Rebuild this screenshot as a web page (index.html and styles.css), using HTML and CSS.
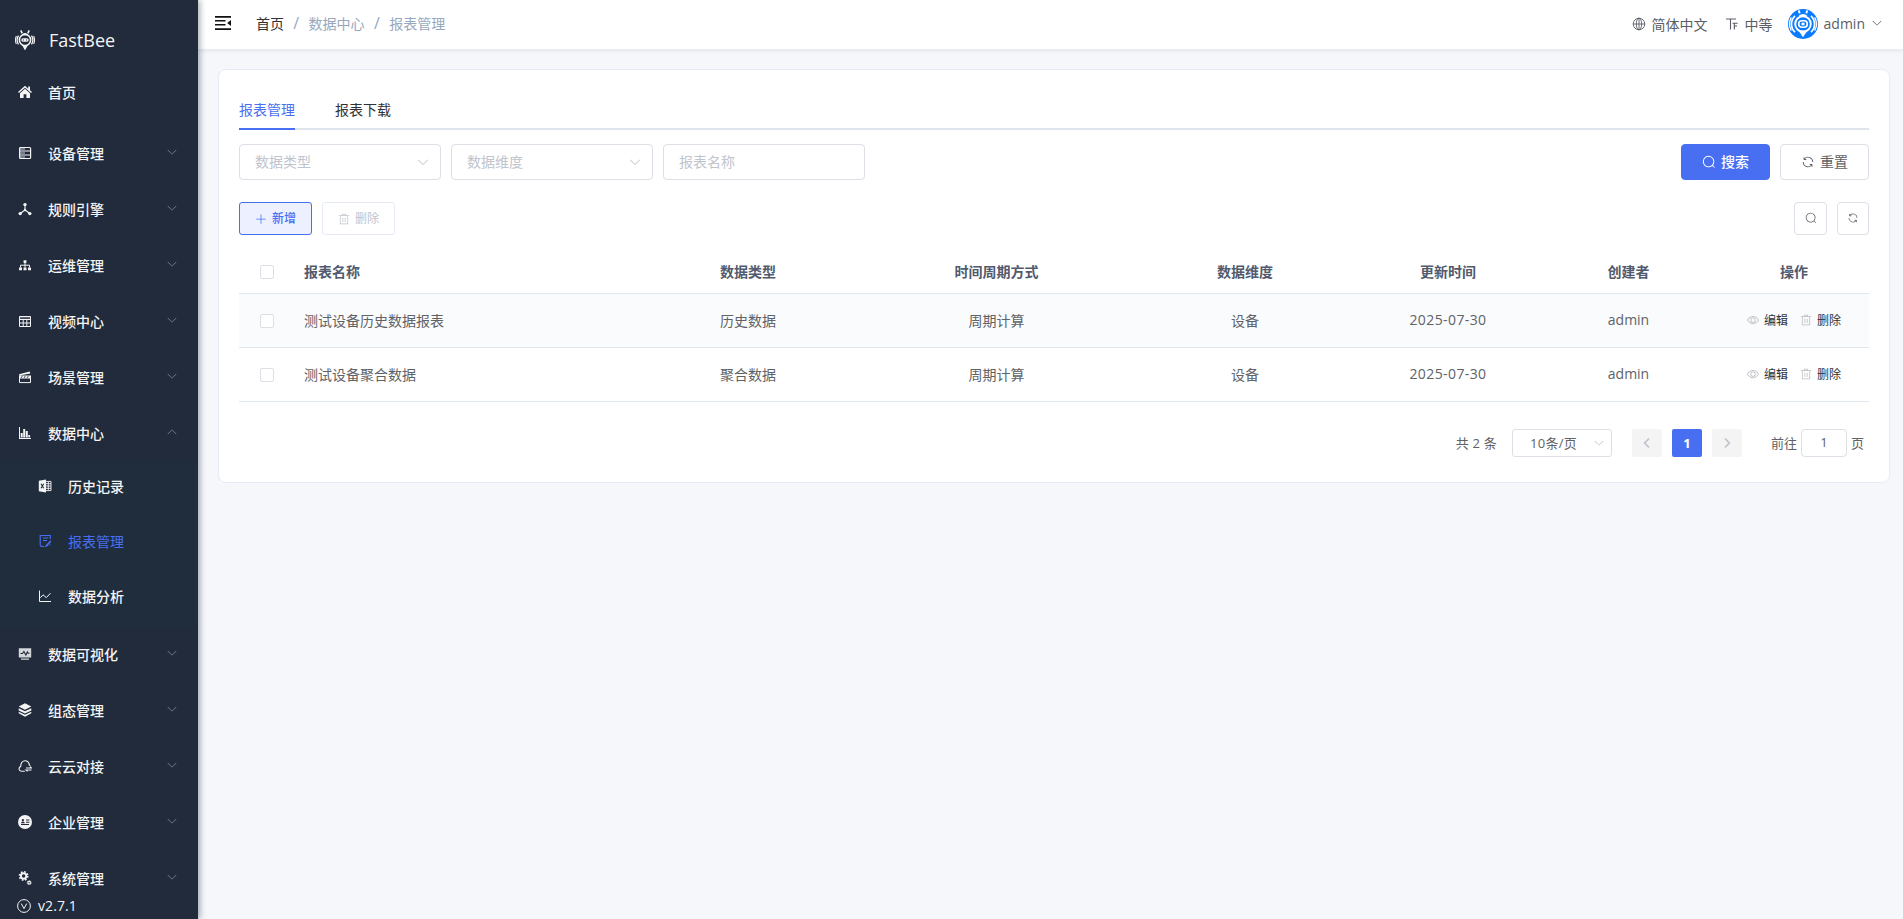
FILE: index.html
```html
<!DOCTYPE html>
<html lang="zh-CN">
<head>
  <meta charset="UTF-8" />
  <meta name="viewport" content="width=device-width, initial-scale=1" />
  <title>报表管理 - FastBee</title>
  <link rel="stylesheet" href="styles.css">
</head>
<body>
  <svg class="sprite" aria-hidden="true">
    <symbol id="i-down" viewBox="0 0 1024 1024"><path d="M831.872 340.864 512 652.672 192.128 340.864a30.592 30.592 0 0 0-42.752 0 29.12 29.12 0 0 0 0 41.6L489.664 714.24a32 32 0 0 0 44.672 0l340.288-331.712a29.12 29.12 0 0 0 0-41.728 30.592 30.592 0 0 0-42.752 0z"/></symbol>
    <symbol id="i-search" viewBox="0 0 1024 1024"><path d="m795.904 750.72 124.992 124.928a32 32 0 0 1-45.248 45.248L750.656 795.904a416 416 0 1 1 45.248-45.248zM480 832a352 352 0 1 0 0-704 352 352 0 0 0 0 704"/></symbol>
    <symbol id="i-refresh" viewBox="0 0 1024 1024"><path d="M771.776 794.88A384 384 0 0 1 128 512h64a320 320 0 0 0 555.712 216.448H654.72a32 32 0 1 1 0-64h149.056a32 32 0 0 1 32 32v148.928a32 32 0 1 1-64 0v-50.56zM276.288 295.616h92.992a32 32 0 0 1 0 64H220.16a32 32 0 0 1-32-32V178.56a32 32 0 0 1 64 0v50.56A384 384 0 0 1 896.128 512h-64a320 320 0 0 0-555.776-216.384z"/></symbol>
    <symbol id="i-plus" viewBox="0 0 1024 1024"><path d="M480 480V128a32 32 0 0 1 64 0v352h352a32 32 0 1 1 0 64H544v352a32 32 0 1 1-64 0V544H128a32 32 0 0 1 0-64z"/></symbol>
    <symbol id="i-delete" viewBox="0 0 1024 1024"><path d="M160 256H96a32 32 0 0 1 0-64h256V95.936a32 32 0 0 1 32-32h256a32 32 0 0 1 32 32V192h256a32 32 0 1 1 0 64h-64v672a32 32 0 0 1-32 32H192a32 32 0 0 1-32-32zm448-64v-64H416v64zM224 896h576V256H224zm192-128a32 32 0 0 1-32-32V416a32 32 0 0 1 64 0v320a32 32 0 0 1-32 32m192 0a32 32 0 0 1-32-32V416a32 32 0 0 1 64 0v320a32 32 0 0 1-32 32"/></symbol>
    <symbol id="i-view" viewBox="0 0 1024 1024"><path d="M512 160c320 0 512 352 512 352S832 864 512 864 0 512 0 512s192-352 512-352m0 64c-225.28 0-384.128 208.064-436.8 288 52.608 79.872 211.456 288 436.8 288 225.28 0 384.128-208.064 436.8-288-52.608-79.872-211.456-288-436.8-288m0 64a224 224 0 1 1 0 448 224 224 0 0 1 0-448m0 64a160.192 160.192 0 0 0-160 160c0 88.192 71.744 160 160 160s160-71.808 160-160-71.744-160-160-160"/></symbol>
    <symbol id="i-bee" viewBox="0 0 20 20">
      <g fill="none" stroke="currentColor">
        <path d="M5.8 0.4 7.2 3.4M14.2 0.4 12.8 3.4" stroke-width="1.6"/>
        <circle cx="10" cy="10" r="5.6" stroke-width="1.6"/>
        <path d="M3.5 5.6a8.2 8.2 0 0 0 0 8.8M16.5 5.6a8.2 8.2 0 0 1 0 8.8" stroke-width="1.3"/>
        <path d="M1.4 6a9.4 9.4 0 0 0 0 8M18.6 6a9.4 9.4 0 0 1 0 8" stroke-width="1.1"/>
      </g>
      <path d="M6.8 4.4Q10 1.4 13.2 4.4L12 5.2H8zM7 15h6l-3 5.5z"/>
      <rect x="6.3" y="8.2" width="7.4" height="3.6" rx="1.8"/>
      <path d="M8 9.5h1v1H8zM11 9.5h1v1h-1z" fill="#212b3c"/>
    </symbol>
  </svg>

  <aside class="sidebar">
    <div class="logo"><svg class="logo-icon"><use href="#i-bee"/></svg><span>FastBee</span></div>
    <ul class="menu">
      <li class="menu-item home">
        <svg class="icon" viewBox="0 0 14 14"><path d="M7 .8 0 7.1l.9 1L7 2.7l6.1 5.4.9-1-2-1.8V1.6h-1.8v2.1z"/><path d="M7 3.8 2 8.2V13h3.6V9.2h2.8V13H12V8.2z"/></svg>
        <span>首页</span>
      </li>
      <li class="menu-item">
        <svg class="icon" viewBox="0 0 14 14"><g fill="none" stroke="currentColor" stroke-width="1.2"><rect x="1.6" y="1.5" width="11" height="11" rx="1"/><path d="M1.6 5h11M1.6 9h11"/></g><path d="M2 2h5v2H2zM2 6h5v2H2zM2 10h5v2H2z" opacity=".4"/></svg>
        <span>设备管理</span><svg class="arrow"><use href="#i-down"/></svg>
      </li>
      <li class="menu-item">
        <svg class="icon" viewBox="0 0 14 14"><path d="M7 3v5L2.5 11.3M7 8l4.5 3.3" fill="none" stroke="currentColor" stroke-width="1.1"/><circle cx="7" cy="2.6" r="1.7"/><circle cx="2.2" cy="11.6" r="1.7"/><circle cx="11.8" cy="11.6" r="1.7"/><circle cx="7" cy="8" r="1.2"/></svg>
        <span>规则引擎</span><svg class="arrow"><use href="#i-down"/></svg>
      </li>
      <li class="menu-item">
        <svg class="icon" viewBox="0 0 14 14"><path d="M5.6 2.2h2.8V5H5.6zM1 9.4h3v2.8H1zM5.5 9.4h3v2.8h-3zM10 9.4h3v2.8h-3z"/><path d="M7 5v4.4M2.5 9.4V7.2h9v2.2" fill="none" stroke="currentColor"/></svg>
        <span>运维管理</span><svg class="arrow"><use href="#i-down"/></svg>
      </li>
      <li class="menu-item">
        <svg class="icon" viewBox="0 0 14 14"><path d="M1.5 2.5h11v10h-11zM1.5 5.5h11M1.5 9h11M5.2 5.5v7M8.8 5.5v7" fill="none" stroke="currentColor" stroke-width="1"/><path d="M1.5 2.5h11v2h-11z" opacity=".3"/></svg>
        <span>视频中心</span><svg class="arrow"><use href="#i-down"/></svg>
      </li>
      <li class="menu-item">
        <svg class="icon" viewBox="0 0 14 14"><path d="M1 4.2 11.7 1.4l.6 2L1.5 5.5zM1 5.5h12v3H1z"/><path d="M1.5 7.5v5.1h11V7.5" fill="none" stroke="currentColor"/><path d="m3 8 1.3-2M6 8l1.3-2M9 8l1.3-2" stroke="#212b3c" stroke-width=".8"/></svg>
        <span>场景管理</span><svg class="arrow"><use href="#i-down"/></svg>
      </li>
      <li class="menu-item open">
        <svg class="icon" viewBox="0 0 14 14"><path d="M1 1h1v11h11v1H1z"/><path d="M2.7 7h2v4.5h-2zM5.2 3h2v8.5h-2zM7.8 5h2v6.5h-2zM10.3 9h1.8v2.5h-1.8z"/></svg>
        <span>数据中心</span><svg class="arrow"><use href="#i-down"/></svg>
      </li>
      <li>
        <ul class="submenu">
          <li class="sub-item">
            <svg class="icon" viewBox="0 0 14 14"><path d="M.8 1.8 8 .6v12.8L.8 12.2z"/><path d="M8 2.4h5v9.2H8M8 4.7h5M8 7h5M8 9.3h5M10.3 2.4v9.2" fill="none" stroke="currentColor" stroke-width=".9"/><path d="m3 4.8 2.7 4.4M5.7 4.8 3 9.2" stroke="#1f2d3d" stroke-width="1.1"/></svg>
            <span>历史记录</span>
          </li>
          <li class="sub-item active">
            <svg class="icon" viewBox="0 0 14 14"><g fill="none" stroke="currentColor" stroke-width="1.1"><path d="M12.3 5V1.5H2.2v9.3q0 1.7 1.6 1.7h2.4M5 4h5.3M5 6.5h4"/></g><path d="m12.5 6.2-4.8 5-.8 2 2.1-.7 4.3-4.8zM10.5 12l2-2v1z"/></svg>
            <span>报表管理</span>
          </li>
          <li class="sub-item">
            <svg class="icon" viewBox="0 0 14 14"><path d="M1.5 1.5v11H13M2.3 8.8 5 5.8l3.3 2.8 4.2-4.4" fill="none" stroke="currentColor" stroke-width="1"/></svg>
            <span>数据分析</span>
          </li>
        </ul>
      </li>
      <li class="menu-item">
        <svg class="icon" viewBox="0 0 14 14"><path d="M.8 1.2h12.4v9.3H.8zM3 11.4h8v1.3H3z" opacity=".85"/><path d="M2.5 6.5h2l1.4-2 2 3.5 1.5-3 .8 1.3h1.3" fill="none" stroke="#212b3c" stroke-width="1.1"/></svg>
        <span>数据可视化</span><svg class="arrow"><use href="#i-down"/></svg>
      </li>
      <li class="menu-item">
        <svg class="icon" viewBox="0 0 14 14"><path d="m7 .3 6.3 3.2L7 6.8.7 3.5z"/><path d="m.7 5.2 6.3 3 6.3-3v2.2L7 10.4.7 7.4z"/><path d="m.7 8.7 6.3 3 6.3-3v1.5L7 13.7.7 10.2z"/></svg>
        <span>组态管理</span><svg class="arrow"><use href="#i-down"/></svg>
      </li>
      <li class="menu-item">
        <svg class="icon" viewBox="0 0 14 14"><path d="M6.8 12.2H3.5C.6 12.2.2 8.6 2.7 7.6 2.6 3.9 4.6 1.7 7 1.7c2.5 0 4 1.7 4.3 4.2l1 .8M8 9h5.5L12 7.7M13.5 11H8l1.5 1.3" fill="none" stroke="currentColor" stroke-width="1.1"/></svg>
        <span>云云对接</span><svg class="arrow"><use href="#i-down"/></svg>
      </li>
      <li class="menu-item">
        <svg class="icon" viewBox="0 0 14 14"><circle cx="7" cy="7" r="7"/><g fill="#212b3c"><circle cx="4.9" cy="5.2" r="1.1"/><path d="M3 8.2q0-1.6 1.9-1.6t1.9 1.6zM8 4.4h3.4v1H8zM8 6.7h3.4v1H8zM3 9.1h8v.8H3z"/></g></svg>
        <span>企业管理</span><svg class="arrow"><use href="#i-down"/></svg>
      </li>
      <li class="menu-item">
        <svg class="icon" viewBox="0 0 14 14"><g fill="none" stroke="currentColor"><circle cx="5.6" cy="5" r="2.7" stroke-width="1.9"/><circle cx="5.6" cy="5" r="4.2" stroke-width="1.5" stroke-dasharray="1.7 1.6"/><circle cx="11.2" cy="11.7" r="1.3" stroke-width="1.1"/><circle cx="11.2" cy="11.7" r="2.1" stroke-width=".8" stroke-dasharray=".9 .8"/></g></svg>
        <span>系统管理</span><svg class="arrow"><use href="#i-down"/></svg>
      </li>
    </ul>
    <div class="version">
      <svg viewBox="0 0 14 14"><g fill="none" stroke="currentColor"><circle cx="7" cy="7" r="6.4"/><path d="m4.3 4.6 2.7 5 2.7-5"/></g></svg>
      <span>v2.7.1</span>
    </div>
  </aside>

  <div class="main">
    <header class="navbar">
      <svg class="hamburger" viewBox="0 0 16 14"><path d="M0 0h16v1.8H0zM0 4h10.5v1.6H0zM0 8h10.5v1.6H0zM0 12.2h16V14H0zM16 4v6l-3.8-3z"/></svg>
      <nav class="breadcrumb">
        <span class="first">首页</span><i>/</i><span>数据中心</span><i>/</i><span>报表管理</span>
      </nav>
      <div class="nav-right">
        <div class="nav-link lang">
          <svg viewBox="0 0 14 14"><g fill="none" stroke="currentColor" stroke-width=".9"><circle cx="7" cy="7" r="5.8"/><ellipse cx="7" cy="7" rx="2.7" ry="5.8"/><path d="M7 1.2v11.6M1.2 7h11.6"/></g></svg>
          <span>简体中文</span>
        </div>
        <div class="nav-link size">
          <svg viewBox="0 0 14 14"><path d="M1 2h10M5.5 2v10.5M7.5 6.3h5.2M9.3 6.3v6.2M9.3 9h2.7" fill="none" stroke="currentColor" stroke-width="1.1"/></svg>
          <span>中等</span>
        </div>
        <div class="user">
          <svg class="avatar" viewBox="0 0 30 30">
            <circle cx="15" cy="15" r="15" fill="#0a7bff"/>
            <g fill="none" stroke="#fff">
              <path d="m10.6 1.4 1.2 3M19.4 1.4l-1.2 3" stroke-width="1.8"/>
              <circle cx="15" cy="15" r="7.8" stroke-width="1.9"/>
              <path d="M7 6.8a11.3 11.3 0 0 0 0 16.4M23 6.8a11.3 11.3 0 0 1 0 16.4" stroke-width="1.7"/>
              <path d="M3.3 8.4a13.6 13.6 0 0 0 0 13.2M26.7 8.4a13.6 13.6 0 0 1 0 13.2" stroke-width="1.3"/>
              <rect x="10.7" y="11.8" width="8.6" height="6.4" rx="3.2" stroke-width="1.6"/>
            </g>
            <path d="M10.6 21.6h8.8L15 28.2z" fill="#fff"/>
            <path d="M10.5 6.9Q15 2.9 19.5 6.9L17 8h-4z" fill="#fff"/>
            <rect x="13.5" y="13.7" width="3" height="2.6" fill="#fff"/>
          </svg>
          <span>admin</span>
          <svg class="caret"><use href="#i-down"/></svg>
        </div>
      </div>
    </header>

    <section class="card">
      <div class="tabs">
        <div class="tab active">报表管理</div>
        <div class="tab">报表下载</div>
      </div>

      <div class="filters">
        <div class="field"><span>数据类型</span><svg><use href="#i-down"/></svg></div>
        <div class="field"><span>数据维度</span><svg><use href="#i-down"/></svg></div>
        <div class="field"><span>报表名称</span></div>
        <button class="btn primary push"><svg><use href="#i-search"/></svg><span>搜索</span></button>
        <button class="btn"><svg><use href="#i-refresh"/></svg><span>重置</span></button>
      </div>

      <div class="toolbar">
        <button class="btn small plain"><svg><use href="#i-plus"/></svg><span>新增</span></button>
        <button class="btn small disabled"><svg><use href="#i-delete"/></svg><span>删除</span></button>
        <button class="btn square push"><svg><use href="#i-search"/></svg></button>
        <button class="btn square narrow"><svg><use href="#i-refresh"/></svg></button>
      </div>

      <table class="table">
        <colgroup>
          <col class="c-check"><col class="c-name"><col class="c-type"><col class="c-period"><col class="c-dim"><col class="c-time"><col class="c-user"><col class="c-action">
        </colgroup>
        <thead>
          <tr>
            <th><span class="checkbox"></span></th>
            <th class="left">报表名称</th>
            <th>数据类型</th>
            <th>时间周期方式</th>
            <th>数据维度</th>
            <th>更新时间</th>
            <th>创建者</th>
            <th>操作</th>
          </tr>
        </thead>
        <tbody>
          <tr class="hover">
            <td><span class="checkbox"></span></td>
            <td class="left">测试设备历史数据报表</td>
            <td>历史数据</td>
            <td>周期计算</td>
            <td>设备</td>
            <td class="date">2025-07-30</td>
            <td>admin</td>
            <td><div class="actions"><a><svg><use href="#i-view"/></svg>编辑</a><a><svg><use href="#i-delete"/></svg>删除</a></div></td>
          </tr>
          <tr>
            <td><span class="checkbox"></span></td>
            <td class="left">测试设备聚合数据</td>
            <td>聚合数据</td>
            <td>周期计算</td>
            <td>设备</td>
            <td class="date">2025-07-30</td>
            <td>admin</td>
            <td><div class="actions"><a><svg><use href="#i-view"/></svg>编辑</a><a><svg><use href="#i-delete"/></svg>删除</a></div></td>
          </tr>
        </tbody>
      </table>

      <div class="pagination">
        <span class="total">共 2 条</span>
        <div class="page-size"><span>10条/页</span><svg><use href="#i-down"/></svg></div>
        <button class="pager"><svg viewBox="0 0 12 12"><path d="M8 1.5 3.7 6 8 10.5"/></svg></button>
        <button class="pager current">1</button>
        <button class="pager"><svg viewBox="0 0 12 12"><path d="M4 1.5 8.3 6 4 10.5"/></svg></button>
        <span class="goto">前往</span>
        <div class="page-input">1</div>
        <span>页</span>
      </div>
    </section>
  </div>
</body>
</html>
```
FILE: styles.css
```css
* {
  box-sizing: border-box;
}

body {
  margin: 0;
  height: 100vh;
  display: flex;
  overflow: hidden;
  background: #f5f7fb;
  font-family: "Open Sans", "Noto Sans CJK SC", sans-serif;
  font-size: 14px;
  color: #606266;
}

ul {
  list-style: none;
  margin: 0;
  padding: 0;
}

svg {
  fill: currentColor;
  flex-shrink: 0;
}

.sprite {
  position: absolute;
  width: 0;
  height: 0;
}

/* sidebar */
.sidebar {
  width: 198px;
  height: 100vh;
  flex-shrink: 0;
  display: flex;
  flex-direction: column;
  background: #212b3c;
  color: #f4f4f5;
  box-shadow: 2px 0 6px rgba(0, 21, 41, 0.35);
  z-index: 2;
}

.logo {
  height: 68px;
  flex-shrink: 0;
  display: flex;
  align-items: center;
  gap: 14px;
  padding: 12px 0 0 15px;
  font-size: 18px;
}

.logo-icon {
  width: 20px;
  height: 20px;
}

.menu {
  height: 829px;
  flex-shrink: 0;
  overflow: hidden;
  font-weight: 500;
}

.menu span {
  padding-bottom: 2px;
}

.menu-item {
  height: 56px;
  display: flex;
  align-items: center;
  padding: 0 20px 0 18px;
}

.menu-item.home {
  height: 50px;
  margin-bottom: 8px;
}

.icon {
  width: 14px;
  height: 14px;
  margin-right: 16px;
  margin-top: -2px;
}

.arrow {
  width: 12px;
  height: 12px;
  margin-left: auto;
  margin-top: -4px;
  color: #7b828d;
}

.open .arrow {
  transform: rotate(180deg);
}

.submenu {
  height: 165px;
  background: #1f2d3d;
}

.sub-item {
  height: 50px;
  margin-bottom: 5px;
  display: flex;
  align-items: center;
  padding-left: 38px;
}

.sub-item.active {
  color: #486ff2;
  font-weight: 400;
}

.version {
  display: flex;
  align-items: center;
  gap: 7px;
  height: 18px;
  padding-left: 17px;
  font-weight: 500;
}

.version span {
  padding-bottom: 2px;
  letter-spacing: 0.1px;
}

.version svg {
  width: 14px;
  height: 14px;
}

/* navbar */
.main {
  flex: 1;
  min-width: 0;
}

.navbar {
  height: 50px;
  display: flex;
  align-items: center;
  padding: 0 20px 2px 17px;
  background: #fff;
  border-bottom: 1px solid #e9ebf0;
  box-shadow: 0 1px 4px rgba(0, 21, 41, 0.08);
}

.hamburger {
  width: 16px;
  height: 14px;
  margin-right: 25px;
  margin-top: -2px;
  color: #111;
}

.breadcrumb {
  display: flex;
  padding-bottom: 1px;
  color: #97a8be;
}

.breadcrumb .first {
  color: #303133;
}

.breadcrumb i {
  width: 24.6px;
  text-align: center;
  font-size: 16px;
  line-height: 21px;
  font-style: normal;
}

.nav-right {
  display: flex;
  align-items: center;
  margin-left: auto;
  color: #5a5e66;
}

.nav-link {
  display: flex;
  align-items: center;
  gap: 6px;
}

.nav-link svg {
  width: 14px;
  height: 14px;
}

.size {
  margin-left: 17px;
}

.user {
  display: flex;
  align-items: center;
  margin-left: 15px;
}

.avatar {
  width: 30px;
  height: 30px;
  margin-right: 6px;
}

.caret {
  width: 12px;
  height: 12px;
  margin-left: 6px;
  margin-top: -1px;
}

/* content */
.card {
  height: 414px;
  margin: 19px 13px 0 20px;
  padding: 20px;
  background: #fff;
  border: 1px solid #e6ebf5;
  border-radius: 8px;
}

.tabs {
  height: 40px;
  display: flex;
  gap: 40px;
  border-bottom: 2px solid #dfe4ed;
  color: #303133;
}

.tab {
  height: 40px;
  line-height: 40px;
}

.tab.active {
  color: #486ff2;
  border-bottom: 2px solid #486ff2;
}

.filters {
  display: flex;
  gap: 10px;
  margin-top: 14px;
}

.field {
  width: 202px;
  height: 36px;
  display: flex;
  align-items: center;
  justify-content: space-between;
  padding: 0 10px 0 15px;
  border: 1px solid #dcdfe6;
  border-radius: 4px;
  color: #c0c4cc;
}

.field span,
.btn span {
  padding-bottom: 2px;
}

.field svg {
  width: 14px;
  height: 14px;
}

.btn {
  width: 89px;
  height: 36px;
  display: flex;
  align-items: center;
  justify-content: center;
  gap: 5px;
  padding: 0;
  background: #fff;
  border: 1px solid #dcdfe6;
  border-radius: 4px;
  font: inherit;
  color: #606266;
}

.btn svg {
  width: 14px;
  height: 14px;
}

.btn.primary {
  background: #486ff2;
  border-color: #486ff2;
  color: #fff;
  font-weight: 500;
}

.push {
  margin-left: auto;
}

.toolbar {
  display: flex;
  gap: 10px;
  margin: 22px 0 14px;
}

.btn.small {
  width: 73px;
  height: 33px;
  font-size: 12px;
  border-radius: 3px;
}

.btn.small svg,
.btn.square svg {
  width: 12px;
  height: 12px;
}

.btn.plain {
  background: #edf0fe;
  border-color: #486ff2;
  color: #486ff2;
  font-weight: 500;
}

.btn.disabled {
  border-color: #e6ebf5;
  color: #c0c4cc;
}

.btn.square {
  width: 33px;
  height: 33px;
  padding-bottom: 2px;
}

.btn.narrow {
  width: 32px;
}

.table {
  width: 100%;
  table-layout: fixed;
  border-collapse: separate;
  border-spacing: 0;
}

.c-check { width: 55px; }
.c-name { width: 341px; }
.c-type { width: 226px; }
.c-period { width: 271px; }
.c-dim { width: 226px; }
.c-time { width: 180px; }
.c-user { width: 181px; }
.c-action { width: 150px; }

.table th,
.table td {
  height: 54px;
  padding: 0 0 2px;
  border-bottom: 1px solid #dfe6ec;
  text-align: center;
}

.table th {
  height: 45px;
  padding-bottom: 1px;
  font-weight: 700;
  color: #515a6e;
}

.table td:first-child {
  padding: 0;
}

.table th:first-child {
  padding: 1px 0 0;
}

.table .left {
  text-align: left;
  padding-left: 10px;
}

.table .date {
  letter-spacing: 0.4px;
}

.hover td {
  background: #fafbfd;
}

.checkbox {
  display: block;
  width: 14px;
  height: 14px;
  margin: 0 auto;
  background: #fff;
  border: 1px solid #dcdfe6;
  border-radius: 2px;
}

.actions {
  display: flex;
  justify-content: center;
  gap: 12px;
  font-size: 12px;
  color: #303133;
}

.actions a {
  display: flex;
  align-items: center;
  gap: 5px;
}

.actions svg {
  width: 12px;
  height: 12px;
  color: #b9bbbf;
}

/* pagination */
.pagination {
  display: flex;
  align-items: center;
  justify-content: flex-end;
  margin-top: 27px;
  padding-right: 5px;
  font-size: 13px;
}

.pagination span {
  padding-bottom: 2px;
}

.total {
  letter-spacing: 0.2px;
}

.page-size {
  width: 100px;
  height: 28px;
  display: flex;
  align-items: center;
  justify-content: space-between;
  margin: 0 20px 0 15px;
  padding: 0 6px 0 17px;
  border: 1px solid #dcdfe6;
  border-radius: 3px;
}

.page-size span {
  letter-spacing: 0.3px;
}

.page-size svg {
  width: 12px;
  height: 12px;
  color: #c0c4cc;
}

.pager {
  width: 30px;
  height: 28px;
  display: flex;
  align-items: center;
  justify-content: center;
  margin-right: 10px;
  padding: 0;
  background: #f4f4f5;
  border: 0;
  border-radius: 2px;
  font: inherit;
  font-weight: 700;
}

.pager svg {
  width: 12px;
  height: 12px;
  fill: none;
  stroke: #c0c4cc;
  stroke-width: 1.8;
}

.pager.current {
  background: #486ff2;
  color: #fff;
}

.goto {
  margin-left: 19px;
}

.page-input {
  width: 46px;
  height: 28px;
  margin: 0 4px;
  line-height: 25px;
  text-align: center;
  border: 1px solid #dcdfe6;
  border-radius: 4px;
}
```
